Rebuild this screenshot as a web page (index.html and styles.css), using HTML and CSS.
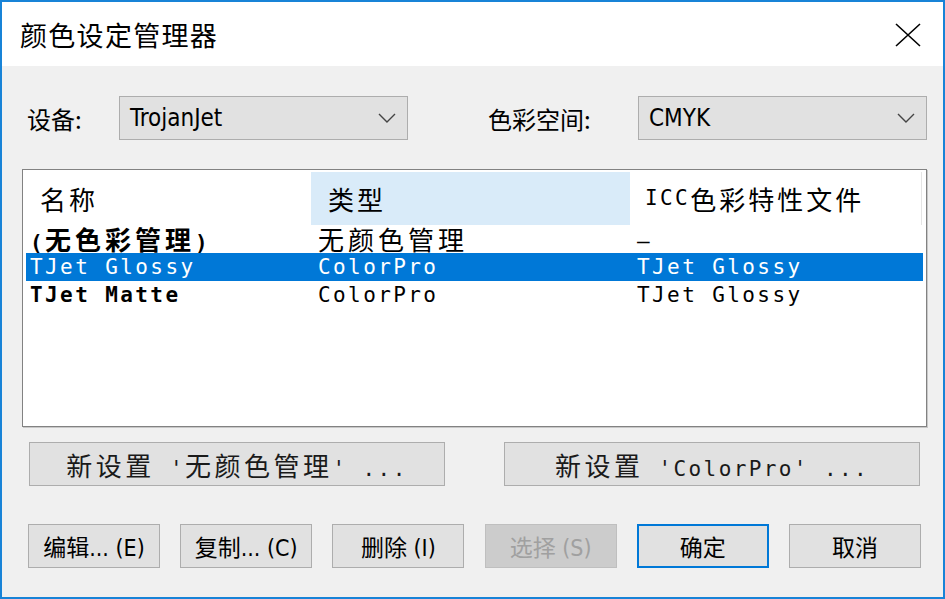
FILE: index.html
```html
<!DOCTYPE html>
<html lang="zh-CN">
<head>
    <meta charset="UTF-8">
    <meta name="viewport" content="width=device-width, initial-scale=1.0">
    <link rel="stylesheet" href="styles.css">
</head>
<body>
    <div class="dialog">
        <div class="titlebar">
            <span class="title">颜色设定管理器</span>
            <svg class="close" width="26" height="24" viewBox="0 0 26 24">
                <path d="M1 1 L25 23 M25 1 L1 23" stroke="#000" stroke-width="1.6" fill="none"/>
            </svg>
        </div>
        <div class="content">
            <div class="field-row">
                <span class="label">设备:</span>
                <div class="select">
                    <span>TrojanJet</span>
                    <svg class="chevron" width="18" height="10" viewBox="0 0 18 10"><path d="M1 1 L9 9 L17 1" stroke="#444" stroke-width="1.4" fill="none"/></svg>
                </div>
                <span class="label label-space">色彩空间:</span>
                <div class="select">
                    <span>CMYK</span>
                    <svg class="chevron" width="18" height="10" viewBox="0 0 18 10"><path d="M1 1 L9 9 L17 1" stroke="#444" stroke-width="1.4" fill="none"/></svg>
                </div>
            </div>

            <div class="list">
                <div class="list-head">
                    <div class="col col-name"><span class="zh">名称</span></div>
                    <div class="col col-type hover"><span class="zh">类型</span></div>
                    <div class="col col-icc">ICC<span class="zh">色彩特性文件</span></div>
                </div>
                <div class="list-row bold">
                    <div class="cell">(<span class="zh">无色彩管理</span>)</div>
                    <div class="cell cell-mid"><span class="zh">无颜色管理</span></div>
                    <div class="cell cell-mid">–</div>
                </div>
                <div class="list-row selected">
                    <div class="cell">TJet Glossy</div>
                    <div class="cell cell-mid">ColorPro</div>
                    <div class="cell cell-mid">TJet Glossy</div>
                </div>
                <div class="list-row">
                    <div class="cell bold">TJet Matte</div>
                    <div class="cell cell-mid">ColorPro</div>
                    <div class="cell cell-mid">TJet Glossy</div>
                </div>
            </div>

            <div class="new-row">
                <button class="btn btn-wide"><span class="zh">新设置</span> '<span class="zh">无颜色管理</span>' ...</button>
                <button class="btn btn-wide"><span class="zh">新设置</span> 'ColorPro' ...</button>
            </div>

            <div class="actions">
                <button class="btn btn-small">编辑... (E)</button>
                <button class="btn btn-small">复制... (C)</button>
                <button class="btn btn-small">删除 (I)</button>
                <button class="btn btn-small disabled">选择 (S)</button>
                <button class="btn btn-small default">确定</button>
                <button class="btn btn-small">取消</button>
            </div>
        </div>
    </div>
</body>
</html>
```

FILE: styles.css
```css
html, body {
    margin: 0;
    padding: 0;
    background-color: #ffffff;
    overflow: hidden;
}
.dialog {
    width: 945px;
    height: 599px;
    box-sizing: border-box;
    border: 2px solid #1883d7;
    display: flex;
    flex-direction: column;
    font-family: "DejaVu Sans Condensed", "DejaVu Sans", "Noto Sans CJK SC", sans-serif;
    font-stretch: condensed;
    color: #000000;
}
.titlebar {
    height: 64px;
    flex: none;
    background-color: #ffffff;
    display: flex;
    align-items: center;
    justify-content: space-between;
    padding: 0 22px 0 18px;
}
.title {
    font-family: "Noto Sans CJK SC", sans-serif;
    font-size: 27px;
    letter-spacing: 1.3px;
}
.close {
    margin-top: 2px;
}
.content {
    flex: 1;
    background-color: #f0f0f0;
    padding: 30px 16px 0 20px;
}
.field-row {
    display: grid;
    grid-template-columns: 97px 289px 1fr 289px;
    height: 44px;
    align-items: center;
}
.label {
    font-family: "Noto Sans CJK SC", sans-serif;
    font-size: 24px;
    padding-left: 5px;
}
.label-space {
    padding-left: 80px;
}
.select {
    height: 44px;
    box-sizing: border-box;
    background-color: #e1e1e1;
    border: 1px solid #adadad;
    display: flex;
    align-items: center;
    justify-content: space-between;
    padding: 0 11px 0 10px;
    font-size: 24px;
}
.list {
    margin-top: 29px;
    height: 258px;
    box-sizing: border-box;
    background-color: #ffffff;
    border: 1px solid #828282;
    box-shadow: 1px 1px 0 #c8c8c8;
    padding: 2px 3px 0 3px;
    font-family: "DejaVu Sans Mono", "Noto Sans CJK SC", monospace;
    font-size: 21px;
    letter-spacing: 2.4px;
}
.zh {
    font-family: "Noto Sans CJK SC", sans-serif;
    font-size: 26px;
    letter-spacing: 4px;
}
.list-head {
    display: grid;
    grid-template-columns: 285px 319px 291px;
    height: 53px;
    border-right: 1px solid #e5e5e5;
    width: 895px;
}
.col {
    display: flex;
    align-items: center;
    padding-left: 14px;
    line-height: 1;
}
.col .zh {
    letter-spacing: 3px;
}
.col-type {
    padding-left: 17px;
}
.col-icc {
    padding-left: 15px;
}
.hover {
    background-color: #d9ebf9;
}
.list-row {
    display: grid;
    grid-template-columns: 285px 319px 1fr;
    height: 28px;
    align-items: center;
    line-height: 28px;
    white-space: nowrap;
}
.list-row:first-of-type {
    margin-top: 1px;
}
.cell {
    padding-left: 4px;
}
.cell-mid {
    padding-left: 7px;
}
.bold {
    font-weight: bold;
}
.bold .cell-mid {
    font-weight: normal;
}
.selected {
    background-color: #0078d7;
    color: #ffffff;
}
.new-row {
    display: flex;
    justify-content: space-between;
    padding: 0 7px;
    margin-top: 15px;
}
.btn {
    height: 44px;
    box-sizing: border-box;
    background-color: #e1e1e1;
    border: 1px solid #adadad;
    color: #000000;
    padding: 0;
    margin: 0;
}
.btn-wide {
    width: 416px;
    font-family: "DejaVu Sans Mono", "Noto Sans CJK SC", monospace;
    font-size: 21px;
    letter-spacing: 2.4px;
    white-space: nowrap;
    color: #1a1a1a;
}
.btn-wide .zh {
    letter-spacing: 3.5px;
}
.actions {
    display: flex;
    justify-content: space-between;
    padding: 0 6px;
    margin-top: 38px;
}
.btn-small {
    width: 132px;
    font-family: "DejaVu Sans Condensed", "DejaVu Sans", "Noto Sans CJK SC", sans-serif;
    font-stretch: condensed;
    font-size: 23px;
    white-space: nowrap;
}
.disabled {
    background-color: #cccccc;
    border-color: #bfbfbf;
    color: #a0a0a0;
}
.default {
    border: 2px solid #0078d7;
}
```
